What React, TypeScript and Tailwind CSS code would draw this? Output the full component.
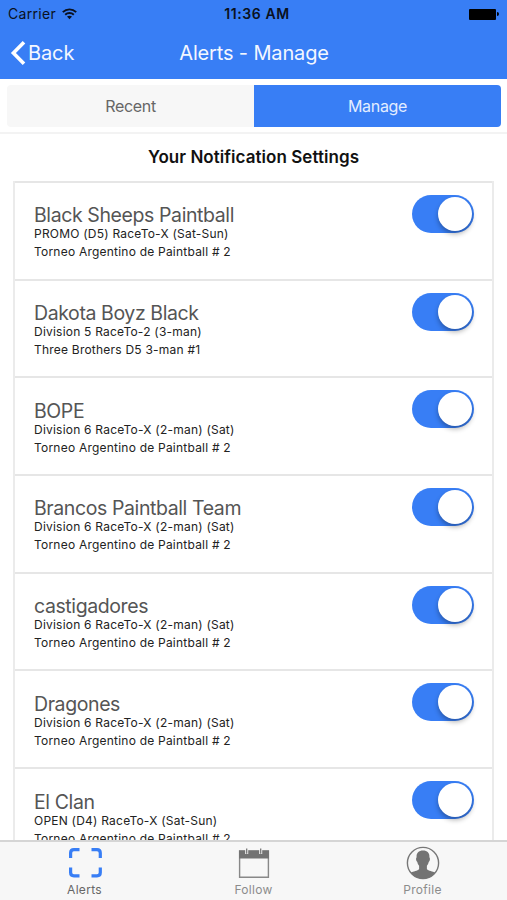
import React from "react";

type Team = { name: string; division: string; event: string };

const ARG = "Torneo Argentino de Paintball # 2";

const teams: Team[] = [
  { name: "Black Sheeps Paintball", division: "PROMO (D5) RaceTo-X (Sat-Sun)", event: ARG },
  { name: "Dakota Boyz Black", division: "Division 5 RaceTo-2 (3-man)", event: "Three Brothers D5 3-man #1" },
  { name: "BOPE", division: "Division 6 RaceTo-X (2-man) (Sat)", event: ARG },
  { name: "Brancos Paintball Team", division: "Division 6 RaceTo-X (2-man) (Sat)", event: ARG },
  { name: "castigadores", division: "Division 6 RaceTo-X (2-man) (Sat)", event: ARG },
  { name: "Dragones", division: "Division 6 RaceTo-X (2-man) (Sat)", event: ARG },
  { name: "El Clan", division: "OPEN (D4) RaceTo-X (Sat-Sun)", event: ARG },
];

function WifiIcon() {
  return (
    <svg width="15" height="12" viewBox="0 0 15 12" fill="none" stroke="#0a1120" strokeWidth="1.9">
      <path d="M0.8 4.2C4.6 0.4 10.4 0.4 14.2 4.2" />
      <path d="M3.2 6.7C5.6 4.4 9.4 4.4 11.8 6.7" />
      <path d="M7.5 11.2L5 8.6C6.4 7.4 8.6 7.4 10 8.6Z" fill="#0a1120" stroke="none" />
    </svg>
  );
}

function Header() {
  return (
    <header className="h-[79px] shrink-0 bg-[#387ef5]">
      <div className="grid h-[28px] grid-cols-3 items-center px-2 text-[#0a1120]">
        <div className="flex items-center gap-[6px]">
          <span className="text-[14px] leading-none tracking-[0.3px]">Carrier</span>
          <WifiIcon />
        </div>
        <span className="pl-[7px] text-center text-[14px] leading-none font-semibold tracking-[0.6px]">11:36 AM</span>
        <div className="flex items-center justify-end">
          <div className="h-[11px] w-[27px] rounded-[1px] bg-black" />
          <div className="ml-[1px] h-[4px] w-[2px] rounded-r-full bg-black" />
        </div>
      </div>
      <div className="grid h-[50px] grid-cols-[120px_1fr_120px] items-center text-[20px] text-[#f3f7ff]">
        <div className="flex items-center pl-[10px]">
          <svg width="18" height="26" viewBox="0 0 18 26" fill="none" stroke="white" strokeWidth="3.6">
            <path d="M14 2.2L3.4 13L14 23.8" />
          </svg>
          <span className="tracking-[-0.1px]">Back</span>
        </div>
        <h1 className="pl-px text-center tracking-[-0.15px]">Alerts - Manage</h1>
      </div>
    </header>
  );
}

function Toggle() {
  return (
    <div className="mt-[12px] mr-[18px] flex h-[38px] w-[62.5px] items-center justify-end rounded-full bg-[#387ef5] pr-[2px]">
      <div className="size-[34px] rounded-full bg-white shadow-[0_3px_5px_rgba(0,0,0,0.3)]" />
    </div>
  );
}

function Row({ team }: { team: Team }) {
  return (
    <li className="flex h-[97.7px] shrink-0 justify-between border-t-2 border-[#e6e6e6] pl-[19px]">
      <div className="pt-[20.4px] whitespace-nowrap text-[#222]">
        <h3 className="text-[19.5px] leading-[24px] tracking-[-0.4px] text-[#555]">{team.name}</h3>
        <p className="text-[12px] leading-[14px] tracking-[0.22px]">{team.division}</p>
        <p className="mt-[4px] text-[12px] leading-[14px] tracking-[0.22px]">{team.event}</p>
      </div>
      <Toggle />
    </li>
  );
}

function AlertsIcon() {
  return (
    <svg width="34" height="32" viewBox="0 0 34 32" fill="none" stroke="#387ef5" strokeWidth="3.2">
      <path d="M2.6 11V6Q2.6 2.7 5.9 2.7H11.5M23.5 2.7H29Q32.3 2.7 32.3 6V11M32.3 20.5V25.5Q32.3 28.8 29 28.8H23.5M11.5 28.8H5.9Q2.6 28.8 2.6 25.5V20.5" />
    </svg>
  );
}

function CalendarIcon() {
  return (
    <svg width="32" height="32" viewBox="0 0 32 32" fill="none">
      <path d="M1.6 4H30.4V30.2H1.6Z" stroke="#888" strokeWidth="1.4" />
      <path d="M1 3.5H31V11.5H1Z" fill="#737373" />
      <path d="M8.7 1.5V7M22.7 1.5V7" stroke="#f7f7f7" strokeWidth="3" />
      <path d="M8.7 1.5V6.7M22.7 1.5V6.7" stroke="#777" strokeWidth="1.3" />
    </svg>
  );
}

function ProfileIcon() {
  return (
    <svg width="34" height="34" viewBox="0 0 34 34" fill="none">
      <circle cx="17" cy="17" r="15.6" stroke="#777" strokeWidth="1.4" />
      <path
        d="M17 4.6C21.3 4.6 23.7 7 23.4 11.2C24.4 12 24 15.2 22.7 16C22.3 17.8 21.7 18.8 20.9 19.7V23C22.2 25 27 25.2 29.2 26.8C26.3 30.7 22 32.7 17 32.7S7.7 30.7 4.8 26.8C7 25.2 11.8 25 13.1 23V19.7C12.3 18.8 11.7 17.8 11.3 16C10 15.2 9.6 12 10.6 11.2C10.3 7 12.7 4.6 17 4.6Z"
        fill="#737373"
      />
    </svg>
  );
}

function Tab({ icon, label, active = false }: { icon: React.ReactNode; label: string; active?: boolean }) {
  return (
    <div className="flex flex-1 flex-col items-center">
      <div className="flex h-[41px] items-center justify-center">{icon}</div>
      <span className={`text-[12px] leading-[14px] tracking-[0.3px] ${active ? "text-[#666]" : "text-[#8c8c8c]"}`}>
        {label}
      </span>
    </div>
  );
}

export default function App() {
  return (
    <div className="flex h-[900px] w-[507px] flex-col overflow-hidden bg-white font-['Inter',sans-serif]">
      <Header />
      <nav className="flex h-[55px] shrink-0 border-b-2 border-[#f3f3f3] pr-[6px] pl-[7px] pt-[6px] text-[16px] leading-none tracking-[-0.3px]">
        <div className="flex h-[42px] flex-1 items-center justify-center rounded-l-[4px] bg-[#f7f7f7] text-[#666]">Recent</div>
        <div className="flex h-[42px] flex-1 items-center justify-center rounded-r-[4px] bg-[#387ef5] text-[#e3edff]">Manage</div>
      </nav>
      <main className="flex min-h-0 flex-1 flex-col overflow-hidden">
        <h2 className="h-[47px] shrink-0 text-center text-[17px] leading-[47px] font-semibold tracking-[0.05px] text-[#111]">
          Your Notification Settings
        </h2>
        <ul className="mx-[13px] flex flex-col border-x-2 border-[#ebebeb]">
          {teams.map((t) => (
            <Row key={t.name} team={t} />
          ))}
        </ul>
      </main>
      <footer className="flex h-[60px] shrink-0 border-t-2 border-[#d5d5d5] bg-[#f7f7f7]">
        <Tab icon={<AlertsIcon />} label="Alerts" active />
        <Tab icon={<CalendarIcon />} label="Follow" />
        <Tab icon={<ProfileIcon />} label="Profile" />
      </footer>
    </div>
  );
}
